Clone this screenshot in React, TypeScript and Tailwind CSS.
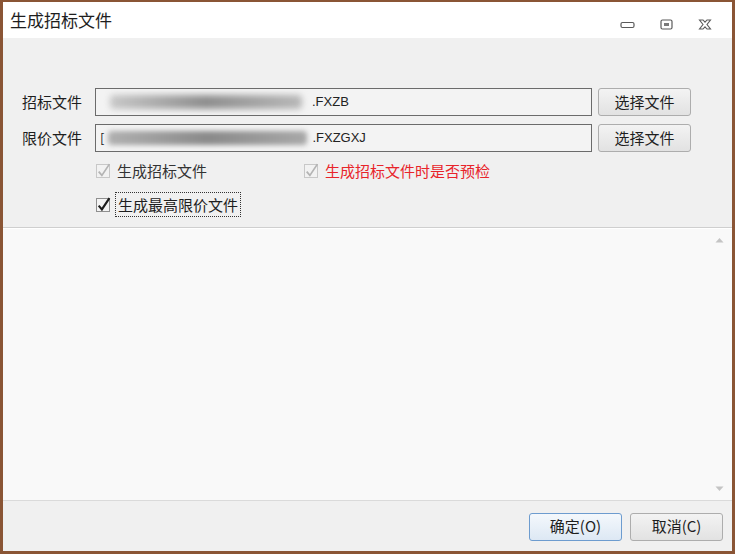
import React from 'react';

const font = { fontFamily: '"Noto Sans CJK SC", "Noto Sans", sans-serif' };

function Check({ disabled, className = '' }: { disabled?: boolean; className?: string }) {
  return (
    <span
      className={`relative inline-block shrink-0 w-[14px] h-[14px] border ${
        disabled ? 'border-[#c8c8c8] bg-[#f2f2f2]' : 'border-[#8f8f8f] bg-[#f4f4f4]'
      } ${className}`}
    >
      <svg viewBox="0 0 14 14" className="absolute -left-[1px] -top-[3px] w-[15px] h-[16px]">
        <path
          d="M2.5 8.5 L5.5 12 L12.5 1.5"
          fill="none"
          stroke={disabled ? '#b4b4b4' : '#1e1e1e'}
          strokeWidth={disabled ? 1.6 : 2}
        />
      </svg>
    </span>
  );
}

function Btn({ children, primary }: { children: React.ReactNode; primary?: boolean }) {
  return (
    <button
      className={`h-[28px] w-[93px] rounded-[3px] border text-[15px] text-[#1e1e1e] bg-gradient-to-b ${
        primary
          ? 'border-[#6d9ccf] from-[#f4f8fc] to-[#dde8f4]'
          : 'border-[#adadad] from-[#f3f3f3] to-[#e2e2e2]'
      }`}
    >
      {children}
    </button>
  );
}

function FileRow({ label, blurred, ext }: { label: string; blurred: React.ReactNode; ext: string }) {
  return (
    <div className="flex items-center h-[28px]">
      <span className="w-[73px] text-[15px] text-[#1e1e1e]">{label}</span>
      <div className="w-[497px] h-[28px] border border-[#6b6b6b] bg-[#f3f3f3] flex items-center pl-[4px] overflow-hidden">
        {blurred}
        <span className="text-[13px] text-[#222]" style={{ fontFamily: '"Liberation Sans", sans-serif' }}>
          {ext}
        </span>
      </div>
      <div className="ml-[6px]">
        <Btn>选择文件</Btn>
      </div>
    </div>
  );
}

export default function App() {
  return (
    <div className="w-[735px] h-[554px] bg-[#8a5535] p-[3px] pt-[2px]" style={font}>
      <div className="w-full h-full flex flex-col bg-[#f0f0f0]">
        {/* Title bar */}
        <div className="h-[36px] bg-white flex items-center pl-[7px] pr-[20px]">
          <span className="text-[17px] text-[#1e1e1e] flex-1">生成招标文件</span>
          <div className="flex items-center gap-[25px] pt-[9px]">
            <svg width="15" height="8" viewBox="0 0 15 8">
              <rect x="1" y="1.5" width="13" height="5" rx="1.5" fill="none" stroke="#5a5a5a" strokeWidth="1.2" />
            </svg>
            <svg width="13" height="11" viewBox="0 0 13 11">
              <rect x="1" y="1" width="11" height="9" rx="1.5" fill="none" stroke="#5a5a5a" strokeWidth="1.2" />
              <rect x="4" y="4" width="5" height="3" fill="#7a7a7a" />
            </svg>
            <svg width="14" height="11" viewBox="0 0 14 11">
              <path
                d="M1.5 1 L5 1 L7 3.2 L9 1 L12.5 1 L9 5.5 L12.5 10 L9 10 L7 7.8 L5 10 L1.5 10 L5 5.5 Z"
                fill="none"
                stroke="#5a5a5a"
                strokeWidth="1.1"
              />
            </svg>
          </div>
        </div>

        {/* Form */}
        <div className="h-[189px] pt-[50px] pl-[19px] flex flex-col">
          <FileRow
            label="招标文件"
            ext=".FXZB"
            blurred={
              <span className="shrink-0 w-[192px] h-[14px] mx-[10px] rounded-sm bg-gradient-to-r from-[#c8c8c8] via-[#8e8e8e] to-[#b8b8b8] blur-[3px]" />
            }
          />
          <div className="h-[8px]" />
          <FileRow
            label="限价文件"
            ext=".FXZGXJ"
            blurred={
              <>
                <span className="text-[13px] text-[#222] mr-[4px]">[</span>
                <span className="shrink-0 w-[199px] h-[14px] mr-[5px] rounded-sm bg-gradient-to-r from-[#b0b0b0] via-[#8a8a8a] to-[#a8a8a8] blur-[2.5px]" />
              </>
            }
          />
          <div className="flex items-center mt-[9px] h-[20px] pl-[74px]">
            <div className="w-[208px] flex items-center">
              <Check disabled />
              <span className="ml-[7px] text-[15px] text-[#333]">生成招标文件</span>
            </div>
            <Check disabled />
            <span className="ml-[7px] text-[15px] text-[#e8242a]">生成招标文件时是否预检</span>
          </div>
          <div className="flex items-center mt-[11px] pl-[74px]">
            <Check />
            <span className="ml-[5px] px-[2px] h-[25px] leading-[23px] text-[15px] text-[#1e1e1e] border border-dotted border-[#333]">
              生成最高限价文件
            </span>
          </div>
        </div>

        {/* Divider */}
        <div className="h-[1px] bg-[#cfcfcf]" />
        <div className="h-[1px] bg-white" />

        {/* Result panel */}
        <div className="flex-1 bg-[#f9f9f9] flex justify-end pr-[8px]">
          <div className="flex flex-col justify-between py-[8px]">
            <svg width="9" height="6" viewBox="0 0 9 6">
              <path d="M0.5 5.5 L4.5 1 L8.5 5.5 Z" fill="#c4c4c4" />
            </svg>
            <svg width="9" height="6" viewBox="0 0 9 6">
              <path d="M0.5 0.5 L4.5 5 L8.5 0.5 Z" fill="#c4c4c4" />
            </svg>
          </div>
        </div>

        {/* Footer */}
        <div className="h-[1px] bg-[#dadada]" />
        <div className="h-[50px] flex items-center justify-end gap-[8px] pr-[9px] pt-[1px]">
          <Btn primary>确定(O)</Btn>
          <Btn>取消(C)</Btn>
        </div>
      </div>
    </div>
  );
}
